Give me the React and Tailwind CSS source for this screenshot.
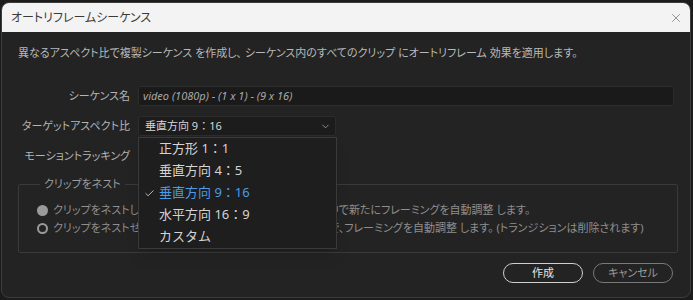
import { Check, ChevronDown, X } from 'lucide-react';

const FONT = "[font-family:'Noto_Sans','Noto_Sans_CJK_JP',sans-serif] [font-feature-settings:'palt']";

const ASPECTS = [
  { label: '正方形 1：1' },
  { label: '垂直方向 4：5' },
  { label: '垂直方向 9：16', checked: true },
  { label: '水平方向 16：9' },
  { label: 'カスタム' },
];

function Row({ label, children, className = '' }) {
  return (
    <div className={`flex items-center gap-2 ${className}`}>
      <div className="w-[112px] shrink-0 text-right text-[11px] text-[#b4b4b4]">{label}</div>
      {children}
    </div>
  );
}

function Radio({ on, children }) {
  return (
    <div className="flex h-[18px] items-center gap-[5px] text-[11px] text-[#8f8f8f] whitespace-nowrap">
      {on ? (
        <span className="h-[11px] w-[11px] rounded-full bg-[#9a9a9a]" />
      ) : (
        <span className="h-[11px] w-[11px] rounded-full border-2 border-[#9a9a9a]" />
      )}
      <span>{children}</span>
    </div>
  );
}

export default function App() {
  return (
    <div className={`h-[300px] w-[693px] bg-[#1c1c1c] pl-[1px] pr-[2px] pt-[2px] pb-[2px] ${FONT}`}>
      <div className="flex h-full flex-col overflow-hidden rounded-lg border border-[#3c3c3c] bg-[#232323]">
        <div className="flex h-[29px] shrink-0 items-center justify-between bg-[#f3f3f3] pl-[9px] pr-[7px]">
          <span className="text-[12px] text-[#3a3a3a]">オートリフレームシーケンス</span>
          <X size={14} strokeWidth={1.2} className="text-[#6a6a6a]" />
        </div>

        <div className="relative flex flex-1 flex-col px-4 pt-[14px]">
          <p className="text-[11px] leading-[14px] text-[#b8b8b8]">
            異なるアスペクト比で複製シーケンス を作成し、 シーケンス内のすべてのクリップ にオートリフレーム 効果を適用します。
          </p>

          <Row label="シーケンス名" className="mt-[26px]">
            <div className="flex h-[20px] w-[539px] items-center rounded-[2px] border border-[#2c2c2c] bg-[#1a1a1a] px-[4px] text-[11px] italic text-[#a8a8a8]">
              video (1080p) - (1 x 1) - (9 x 16)
            </div>
          </Row>

          <Row label="ターゲットアスペクト比" className="mt-[10px]">
            <div className="flex h-[20px] w-[198px] items-center justify-between rounded-[2px] border border-[#2c2c2c] bg-[#1c1c1c] pl-[6px] pr-[4px] text-[11px] text-[#d6d6d6] [font-feature-settings:normal]">
              <span>垂直方向 9：16</span>
              <ChevronDown size={11} strokeWidth={1.5} className="text-[#bbbbbb]" />
            </div>
          </Row>

          <Row label="モーショントラッキング" className="mt-[10px] h-[20px]">
            <div />
          </Row>

          <fieldset className="mt-[10px] h-[77px] w-[660px] rounded-[2px] border border-[#3a3a3a] px-[18px] pt-[9px]">
            <legend className="px-[4px] ml-[3px] text-[11px] text-[#9c9c9c]">クリップをネスト</legend>
            <Radio on>クリップをネストして、それぞれのネストされたシーケンスの中で新たにフレーミングを自動調整 します。</Radio>
            <Radio>クリップをネストせずに、元のシーケンスにある各クリップ内で、フレーミングを自動調整 します。 (トランジションは削除されます)</Radio>
          </fieldset>

          <div className="mt-[10px] flex justify-end gap-[10px] pr-[1px]">
            <button className="h-[20px] w-[80px] rounded-full border-[1.5px] border-[#cfcfcf] text-[11px] text-[#e6e6e6]">
              作成
            </button>
            <button className="h-[20px] w-[80px] rounded-full border-[1.5px] border-[#7a7a7a] text-[11px] text-[#9a9a9a]">
              キャンセル
            </button>
          </div>

          <div className="absolute left-[136px] top-[105px] w-[199px] border border-[#3a3a3a] bg-[#1e1e1e] shadow-lg [font-feature-settings:normal]">
            {ASPECTS.map((a) => (
              <div
                key={a.label}
                className={`flex h-[22px] items-center text-[13px] ${a.checked ? 'text-[#4b9be6]' : 'text-[#d4d4d4]'}`}
              >
                <span className="flex w-[20px] justify-end pr-[4px]">
                  {a.checked && <Check size={11} strokeWidth={2} className="text-[#c8c8c8]" />}
                </span>
                <span>{a.label}</span>
              </div>
            ))}
          </div>
        </div>
      </div>
    </div>
  );
}
